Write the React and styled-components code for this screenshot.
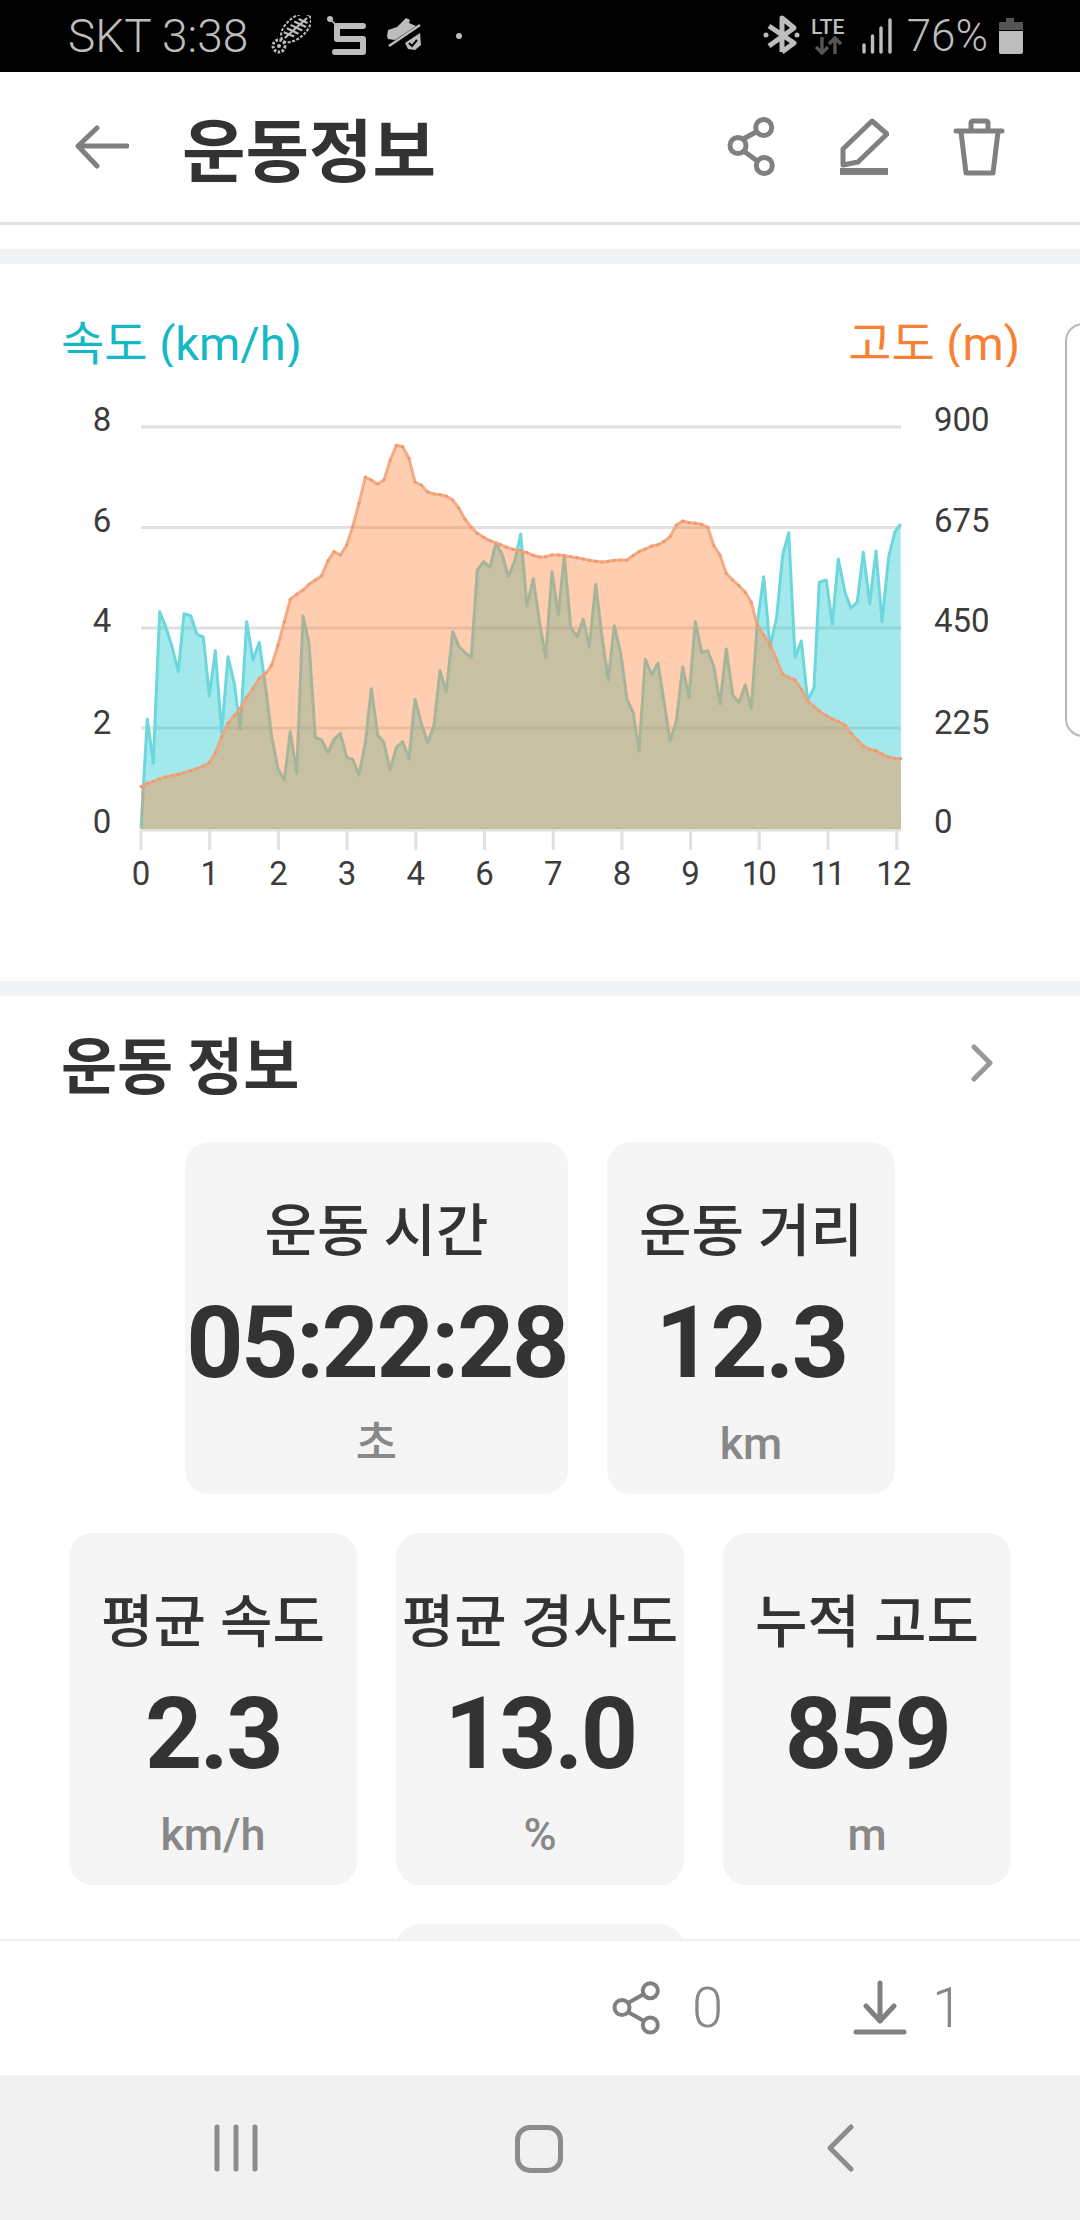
import styled, { createGlobalStyle } from "styled-components";

const KR = `Roboto, "Noto Sans CJK KR", sans-serif`;

const GlobalStyle = createGlobalStyle`
  html, body {
    margin: 0;
    padding: 0;
    background: #fff;
    font-family: ${KR};
  }
`;

// traced from the screenshot, in 3x crop coordinates
const speedA = [[63,1225],[82,897],[100,1030],[119,575],[137,620],[156,680],[175,755],[192,581],[212,587],[231,643],[250,651],[268,828],[286,692],[305,937],[324,710],[343,790],[361,928],[380,605],[399,720],[418,667],[437,805],[455,950],[474,1047],[493,1080],[511,935],[530,1060],[549,588],[567,670],[586,952],[605,960],[624,998],[642,958],[661,940],[680,1012],[698,1018],[717,1065],[736,970],[754,806],[773,945],[792,968],[810,1050],[829,983],[848,965],[867,1017],[885,838],[904,910],[923,968],[942,915],[960,752],[979,815],[998,635],[1017,680],[1035,698],[1054,712],[1072,450],[1091,425],[1110,442],[1128,368],[1147,405],[1165,470],[1185,420]];
const speedB = [[62,342],[81,558],[100,476],[119,610],[137,712],[156,455],[175,586],[193,407],[212,622],[231,650],[250,597],[268,682],[287,493],[306,650],[325,780],[343,617],[362,700],[381,838],[400,878],[417,993],[436,718],[455,765],[474,730],[492,845],[510,963],[529,905],[548,740],[567,833],[586,605],[605,697],[623,692],[642,740],[660,852],[679,687],[698,825],[717,848],[736,795],[754,866],[772,610],[791,470],[810,683],[830,590],[848,405],[866,338],[885,712],[904,663],[923,842],[942,803],[958,487],[979,480],[997,612],[1015,417],[1035,517],[1053,565],[1072,545],[1090,397],[1109,551],[1128,393],[1146,605],[1166,410],[1185,335],[1202,312]];
const altA = [[63,1100],[82,1090],[100,1084],[119,1077],[137,1071],[156,1067],[175,1063],[192,1058],[212,1052],[231,1045],[250,1038],[268,1028],[286,998],[305,950],[324,910],[343,887],[361,865],[380,832],[399,805],[418,775],[437,760],[455,735],[474,675],[493,605],[511,538],[530,523],[549,510],[567,493],[586,480],[605,467],[624,422],[642,395],[661,405],[680,375],[698,320],[717,250],[736,171],[754,180],[773,192],[792,180],[810,122],[829,76],[848,80],[867,115],[885,186],[904,195],[923,216],[942,222],[960,224],[979,228],[998,240],[1017,265],[1035,298],[1054,322],[1072,340],[1091,352],[1110,362]];
const altB = [[0,373],[20,382],[40,388],[62,392],[81,398],[100,406],[119,411],[137,410],[156,405],[175,405],[193,407],[212,410],[231,413],[250,417],[268,421],[287,424],[306,426],[325,424],[343,421],[362,420],[381,420],[400,406],[417,395],[436,387],[455,378],[474,374],[492,365],[510,350],[529,315],[548,303],[567,308],[586,310],[605,313],[623,322],[642,378],[660,405],[679,460],[698,480],[717,497],[736,517],[754,547],[772,615],[791,645],[810,670],[830,720],[848,762],[866,772],[885,780],[904,807],[923,843],[942,860],[958,873],[979,887],[997,897],[1015,905],[1035,915],[1053,940],[1072,960],[1090,978],[1109,988],[1128,992],[1146,1002],[1166,1011],[1185,1015],[1202,1016]];

const toReal = (pts, ox) => pts.map(([x, y]) => [ox + x / 3, 420 + y / 3]);
const speed = [...toReal(speedA, 120), ...toReal(speedB, 500)];
const alt = [...toReal(altA, 120), ...toReal(altB, 500)];

const BASE = 829;
const LEFT = 141;
const RIGHT = 901;
const line = (pts) => pts.map(([x, y]) => `${x.toFixed(1)},${y.toFixed(1)}`).join(" ");
const area = (pts) => `${LEFT},${BASE} ${line(pts)} ${RIGHT},${BASE}`;

const gridY = [427, 527.5, 628, 728];
const xLabels = ["0", "1", "2", "3", "4", "6", "7", "8", "9", "10", "11", "12"];
const leftLabels = [["8", 419], ["6", 520], ["4", 620], ["2", 722], ["0", 821]];
const rightLabels = [["900", 419], ["675", 520], ["450", 620], ["225", 722], ["0", 821]];

const Phone = styled.div`
  width: 1080px;
  height: 2220px;
  display: flex;
  flex-direction: column;
  overflow: hidden;
  background: #fff;
`;

const StatusBar = styled.div`
  height: 72px;
  flex: none;
  background: #000;
  display: flex;
  align-items: center;
  padding: 0 56px 0 68px;
  color: #bdbdbd;
`;

const StatusText = styled.span`
  font: 300 ${(p) => p.$size}px/72px Roboto, sans-serif;
  white-space: nowrap;
  margin-left: ${(p) => p.$gap || 0}px;
`;

const StatusIcon = styled.svg`
  flex: none;
  display: block;
  margin-left: ${(p) => p.$gap || 0}px;
`;

const Spacer = styled.div`
  flex: 1;
`;

const LteBlock = styled.div`
  width: 38px;
  margin-left: 9px;
  display: flex;
  flex-direction: column;
  align-items: center;
`;

const LteText = styled.span`
  font: 500 21px/18px Roboto, sans-serif;
  color: #bdbdbd;
`;

const Header = styled.header`
  height: 150px;
  flex: none;
  display: flex;
  align-items: center;
  padding: 0 75px;
  border-bottom: 3px solid #e3e3e3;
`;

const BackIcon = styled.svg`
  flex: none;
  display: block;
`;

const Title = styled.h1`
  margin: 0 0 0 53px;
  font: 700 69px/150px "Noto Sans CJK KR", sans-serif;
  color: #333;
  white-space: nowrap;
`;

const HeaderActions = styled.div`
  margin-left: auto;
  display: flex;
  align-items: center;
  gap: 64px;
`;

const Divider = styled.div`
  height: 15px;
  flex: none;
  margin-top: ${(p) => p.$top || 0}px;
  background: #f2f3f5;
`;

const ChartSection = styled.section`
  position: relative;
  flex: none;
  height: 717px;
  padding-top: 56px;
  box-sizing: border-box;
`;

const ChartTitles = styled.div`
  display: flex;
  justify-content: space-between;
  height: 47px;
  overflow: hidden;
  padding: 0 60px 0 61px;
`;

const ChartTitle = styled.span`
  font: 400 47px/47px ${KR};
  color: ${(p) => p.$color};
  white-space: nowrap;
`;

const ChartSvg = styled.svg`
  display: block;
`;

const AxisText = styled.text`
  font: 400 33px Roboto, sans-serif;
  fill: #3c3c3c;
  letter-spacing: ${(p) => p.$tight ? "-2px" : "0"};
`;

// edge of the next chart card in the carousel
const NextCardEdge = styled.div`
  position: absolute;
  left: 1065px;
  top: 59px;
  width: 60px;
  height: 414px;
  box-sizing: border-box;
  border: 2px solid #b8b8b8;
  border-radius: 18px;
`;

const Content = styled.div`
  flex: 1;
  min-height: 0;
  overflow: hidden;
`;

const SectionHead = styled.div`
  height: 134px;
  display: flex;
  align-items: center;
  justify-content: space-between;
  padding: 0 87px 0 61px;
`;

const SectionTitle = styled.h2`
  margin: 0;
  font: 700 61px/134px "Noto Sans CJK KR", sans-serif;
  color: #333;
`;

const CardRow = styled.div`
  display: flex;
  justify-content: center;
  gap: 39px;
  margin-top: ${(p) => p.$top}px;
`;

const Card = styled.div`
  width: ${(p) => (p.$wide ? 383 : 288)}px;
  height: 352px;
  flex: none;
  box-sizing: border-box;
  padding-top: 50px;
  border-radius: 24px;
  background: #f5f5f5;
  display: flex;
  flex-direction: column;
  align-items: center;
  white-space: nowrap;
`;

const CardLabel = styled.div`
  font: 500 57px/80px ${KR};
  color: #333;
`;

const CardValue = styled.div`
  font: 700 100px/142px Roboto, sans-serif;
  letter-spacing: -2.5px;
  color: #333;
`;

const CardUnit = styled.div`
  font: 500 45px/60px ${KR};
  color: #888;
`;

const BottomBar = styled.div`
  height: 134px;
  flex: none;
  display: flex;
  align-items: center;
  justify-content: flex-end;
  padding-right: 117px;
  border-top: 2px solid #f1f1f1;
`;

const Count = styled.span`
  font: 300 56px/134px Roboto, sans-serif;
  color: #888;
  margin-left: ${(p) => p.$gap}px;
`;

const BarIcon = styled.svg`
  display: block;
  margin-left: ${(p) => p.$gap || 0}px;
`;

const NavBar = styled.nav`
  height: 145px;
  flex: none;
  background: #f1f1f1;
  display: flex;
  align-items: center;
  padding-left: 212px;
`;

const RecentIcon = styled.svg`
  display: block;
`;

const HomeButton = styled.div`
  width: 48px;
  height: 48px;
  box-sizing: border-box;
  margin: 2px 0 0 257px;
  border: 5px solid #8c8c8c;
  border-radius: 15px;
`;

const NavBack = styled.svg`
  display: block;
  margin-left: 263px;
`;

const STROKE = { fill: "none", stroke: "#808080", strokeWidth: 5, strokeLinecap: "round", strokeLinejoin: "round" };

const ShoeSole = () => (
  <StatusIcon $gap={21} width="42" height="42" viewBox="268 17 42 42">
    <g transform="rotate(-42 295 30)">
      <ellipse cx="295" cy="30" rx="18" ry="10" fill="none" stroke="#bdbdbd" strokeWidth="2" strokeDasharray="3 1.5" />
      <path d="M280 30H310M283 25l5 10M288 24l5 12M293 24l5 12M298 24l5 12M303 25l4 9" stroke="#bdbdbd" strokeWidth="2.2" />
    </g>
    <circle cx="278" cy="48" r="6" fill="none" stroke="#bdbdbd" strokeWidth="3" strokeDasharray="2.5 1.5" />
    <circle cx="278" cy="48" r="2" fill="#bdbdbd" />
  </StatusIcon>
);

const SnakeIcon = () => (
  <StatusIcon $gap={15} width="42" height="42" viewBox="325 17 42 42">
    <circle cx="329" cy="21" r="3" fill="#bdbdbd" />
    <path d="M329 21l7 7" stroke="#bdbdbd" strokeWidth="1.6" />
    <path d="M362 28H336V41H362V54H334" fill="none" stroke="#bdbdbd" strokeWidth="6" strokeLinecap="round" strokeLinejoin="round" />
  </StatusIcon>
);

const ShoeIcon = () => (
  <StatusIcon $gap={17} width="38" height="42" viewBox="384 17 38 42">
    <path d="M386 38l1-6 9-3 9-9 4 2-1 3 7 3-21 14-7-1z" fill="#bdbdbd" />
    <path d="M388 48l31-21" stroke="#bdbdbd" strokeWidth="2.5" />
    <path d="M404 45l15-10 1 12-6 5-7-1z" fill="#bdbdbd" />
    <path d="M408 45l3 3 5-6" fill="none" stroke="#000" strokeWidth="2" />
  </StatusIcon>
);

const Bluetooth = () => (
  <StatusIcon width="37" height="42" viewBox="762 17 37 42">
    <path d="M781 54V20l12 10-25 18M768 28l25 17-12 9" fill="none" stroke="#bdbdbd" strokeWidth="5" strokeLinejoin="round" />
    <circle cx="765" cy="37" r="2.5" fill="#bdbdbd" />
    <circle cx="796" cy="37" r="2.5" fill="#bdbdbd" />
  </StatusIcon>
);

const Signal = () => (
  <StatusIcon $gap={13} width="34" height="36" viewBox="859 20 34 36">
    <path d="M863 54v-7M871.5 54V38M880 54V30M889 54V22" stroke="#bdbdbd" strokeWidth="3.4" strokeLinecap="round" />
  </StatusIcon>
);

const Battery = () => (
  <StatusIcon $gap={10} width="26" height="38" viewBox="998 18 26 38">
    <path d="M1006 19h8v4h8a1 1 0 0 1 1 1v7h-24v-7a1 1 0 0 1 1-1h6z" fill="#555" />
    <path d="M999 32h24v21a2 2 0 0 1-2 2h-20a2 2 0 0 1-2-2z" fill="#bdbdbd" />
  </StatusIcon>
);

const statsTop = [
  { label: "운동 시간", value: "05:22:28", unit: "초", wide: true },
  { label: "운동 거리", value: "12.3", unit: "km" },
];

const statsBottom = [
  { label: "평균 속도", value: "2.3", unit: "km/h" },
  { label: "평균 경사도", value: "13.0", unit: "%" },
  { label: "누적 고도", value: "859", unit: "m" },
];

const StatCard = ({ label, value, unit, wide }) => (
  <Card $wide={wide}>
    <CardLabel>{label}</CardLabel>
    <CardValue>{value}</CardValue>
    <CardUnit>{unit}</CardUnit>
  </Card>
);

const Chart = () => (
  <ChartSvg width="1080" height="550" viewBox="0 367 1080 550">
    {gridY.map((y) => (
      <line key={y} x1={LEFT} x2={RIGHT} y1={y} y2={y} stroke="#e0e0e0" strokeWidth="3" />
    ))}
    <line x1={LEFT} x2={RIGHT} y1={BASE + 1} y2={BASE + 1} stroke="#e0e0e0" strokeWidth="3" />
    {xLabels.map((t, i) => {
      const x = LEFT + i * 68.7;
      return <line key={t} x1={x} x2={x} y1={BASE} y2={850} stroke="#e0e0e0" strokeWidth="3" />;
    })}
    <polygon points={area(speed)} fill="rgb(25,201,208)" fillOpacity="0.4" />
    <polyline points={line(speed)} fill="none" stroke="#6cd7dd" strokeWidth="3" strokeLinejoin="round" />
    <polygon points={area(alt)} fill="rgb(254,130,56)" fillOpacity="0.4" />
    <polyline points={line(alt)} fill="none" stroke="#f3a077" strokeOpacity="0.85" strokeWidth="3" strokeLinejoin="round" />
    {alt.map(([x, y], i) => (
      <circle key={i} cx={x} cy={y} r="1.6" fill="#ee9a6e" />
    ))}
    {leftLabels.map(([t, y]) => (
      <AxisText key={t} x="102" y={y + 12} textAnchor="middle">{t}</AxisText>
    ))}
    {rightLabels.map(([t, y]) => (
      <AxisText key={t + y} x="934" y={y + 12}>{t}</AxisText>
    ))}
    {xLabels.map((t, i) => (
      <AxisText key={t} $tight x={LEFT + i * 68.7 - (t === "12" ? 4 : 1)} y="885" textAnchor="middle">{t}</AxisText>
    ))}
  </ChartSvg>
);

export default function App() {
  return (
    <Phone>
      <GlobalStyle />
      <StatusBar>
        <StatusText $size={46}>SKT 3:38</StatusText>
        <ShoeSole />
        <SnakeIcon />
        <ShoeIcon />
        <StatusIcon $gap={33} width="6" height="6" viewBox="0 0 6 6">
          <circle cx="3" cy="3" r="3" fill="#bdbdbd" />
        </StatusIcon>
        <Spacer />
        <Bluetooth />
        <LteBlock>
          <LteText>LTE</LteText>
          <svg width="28" height="19" viewBox="0 0 28 19">
            <path d="M8 1v16M2 11l6 6 6-6" fill="none" stroke="#555" strokeWidth="3.4" />
            <path d="M21 18V2M15 8l6-6 6 6" fill="none" stroke="#555" strokeWidth="3.4" />
          </svg>
        </LteBlock>
        <Signal />
        <StatusText $size={44} $gap={13}>76%</StatusText>
        <Battery />
      </StatusBar>

      <Header>
        <BackIcon width="54" height="44" viewBox="74 125 54 44">
          <path d="M126 146H78M96 128L77 146l19 20" {...STROKE} />
        </BackIcon>
        <Title>운동정보</Title>
        <HeaderActions>
          <svg width="48" height="62" viewBox="725 117 48 62">
            <path d="M743 139l11-6M743 153l11 8" {...STROKE} />
            <circle cx="736" cy="146.5" r="8" {...STROKE} />
            <circle cx="761.7" cy="128.5" r="8" {...STROKE} />
            <circle cx="762.3" cy="166.5" r="8" {...STROKE} />
          </svg>
          <svg width="50" height="60" viewBox="839 118 50 60">
            <path d="M843 150l29-28 15 13-29 28-15 3z" {...STROKE} />
            <path d="M840 172.5h48" stroke="#808080" strokeWidth="7" />
          </svg>
          <svg width="52" height="58" viewBox="952 119 52 58">
            <path d="M955 132h46M970 131v-7a2 2 0 0 1 2-2h13a2 2 0 0 1 2 2v7M960 133l5 41h27l5-41" {...STROKE} />
          </svg>
        </HeaderActions>
      </Header>

      <Content>
        <Divider $top={24} />
        <ChartSection>
          <ChartTitles>
            <ChartTitle $color="#14b9c5">속도 (km/h)</ChartTitle>
            <ChartTitle $color="#f97f33">고도 (m)</ChartTitle>
          </ChartTitles>
          <Chart />
          <NextCardEdge />
        </ChartSection>
        <Divider />
        <SectionHead>
          <SectionTitle>운동 정보</SectionTitle>
          <svg width="22" height="38" viewBox="0 0 22 38">
            <path d="M3 3l16 16L3 35" fill="none" stroke="#999" strokeWidth="5" strokeLinecap="round" strokeLinejoin="round" />
          </svg>
        </SectionHead>
        <CardRow $top={12}>
          {statsTop.map((s) => <StatCard key={s.label} {...s} />)}
        </CardRow>
        <CardRow $top={39}>
          {statsBottom.map((s) => <StatCard key={s.label} {...s} />)}
        </CardRow>
        <CardRow $top={39}>
          <Card />
        </CardRow>
      </Content>

      <BottomBar>
        <BarIcon width="50" height="58" viewBox="610 1980 50 58">
          <path d="M627 2004l16-9M627 2013l16 9" fill="none" stroke="#808080" strokeWidth="4" />
          <circle cx="621" cy="2008.5" r="7.5" fill="none" stroke="#808080" strokeWidth="4" />
          <circle cx="649.3" cy="1991.7" r="7.5" fill="none" stroke="#808080" strokeWidth="4" />
          <circle cx="649.3" cy="2026" r="7.5" fill="none" stroke="#808080" strokeWidth="4" />
        </BarIcon>
        <Count $gap={31}>0</Count>
        <BarIcon $gap={130} width="54" height="56" viewBox="854 1981 54 56">
          <path d="M881 1984v38M867 2007l14 15 14-15M857 2033h48" {...STROKE} />
        </BarIcon>
        <Count $gap={25}>1</Count>
      </BottomBar>

      <NavBar>
        <RecentIcon width="46" height="48" viewBox="0 0 46 48">
          <path d="M5 3v42M24 3v42M43 3v42" stroke="#8c8c8c" strokeWidth="5" strokeLinecap="round" />
        </RecentIcon>
        <HomeButton />
        <NavBack width="28" height="48" viewBox="0 0 28 48">
          <path d="M25 3L4 24l21 21" fill="none" stroke="#8c8c8c" strokeWidth="5" strokeLinecap="round" strokeLinejoin="round" />
        </NavBack>
      </NavBar>
    </Phone>
  );
}
